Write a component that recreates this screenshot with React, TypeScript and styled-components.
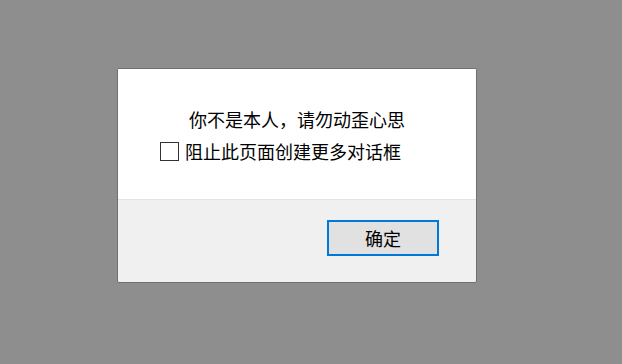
import React from "react";
import styled, { createGlobalStyle } from "styled-components";

const Global = createGlobalStyle`
  html, body {
    margin: 0;
    padding: 0;
    background: #8e8e8e;
    width: 622px;
    height: 364px;
    overflow: hidden;
  }
  * { box-sizing: border-box; }
`;

const Stage = styled.div`
  width: 622px;
  height: 364px;
  padding: 68px 0 0 117px;
  display: flex;
  align-items: flex-start;
  font-family: "Noto Sans CJK SC", "Microsoft YaHei", sans-serif;
  color: #000;
`;

const Dialog = styled.div`
  width: 360px;
  height: 215px;
  border: 1px solid #707070;
  border-radius: 2px;
  background: #f0f0f0;
  display: flex;
  flex-direction: column;
  overflow: hidden;
`;

const Body = styled.div`
  height: 131px;
  background: #ffffff;
  border-bottom: 1px solid #e3e3e3;
  padding: 38px 0 0 42px;
  display: flex;
  flex-direction: column;
`;

const Message = styled.div`
  font-size: 18px;
  line-height: 24px;
  height: 24px;
  text-align: center;
  margin-left: -42px;
  white-space: nowrap;
`;

const CheckRow = styled.label`
  margin-top: 8px;
  height: 24px;
  display: flex;
  align-items: center;
  font-size: 18px;
  line-height: 24px;
  white-space: nowrap;
`;

const Box = styled.span`
  width: 19px;
  height: 19px;
  border: 1px solid #333;
  background: #fff;
  margin-right: 6px;
  flex: none;
`;

const Footer = styled.div`
  flex: 1;
  display: flex;
  justify-content: flex-end;
  align-items: flex-start;
  padding: 20px 37px 0 0;
`;

const Button = styled.button`
  width: 112px;
  height: 36px;
  border: 2px solid #0078d7;
  background: #e1e1e1;
  font-family: "Noto Sans CJK SC", "Microsoft YaHei", sans-serif;
  font-size: 18px;
  line-height: 24px;
  color: #000;
  padding: 0;
  margin: 0;
  display: flex;
  align-items: center;
  justify-content: center;
`;

export default function App() {
  return (
    <>
      <Global />
      <Stage>
        <Dialog>
          <Body>
            <Message>你不是本人，请勿动歪心思</Message>
            <CheckRow>
              <Box />
              阻止此页面创建更多对话框
            </CheckRow>
          </Body>
          <Footer>
            <Button>确定</Button>
          </Footer>
        </Dialog>
      </Stage>
    </>
  );
}
